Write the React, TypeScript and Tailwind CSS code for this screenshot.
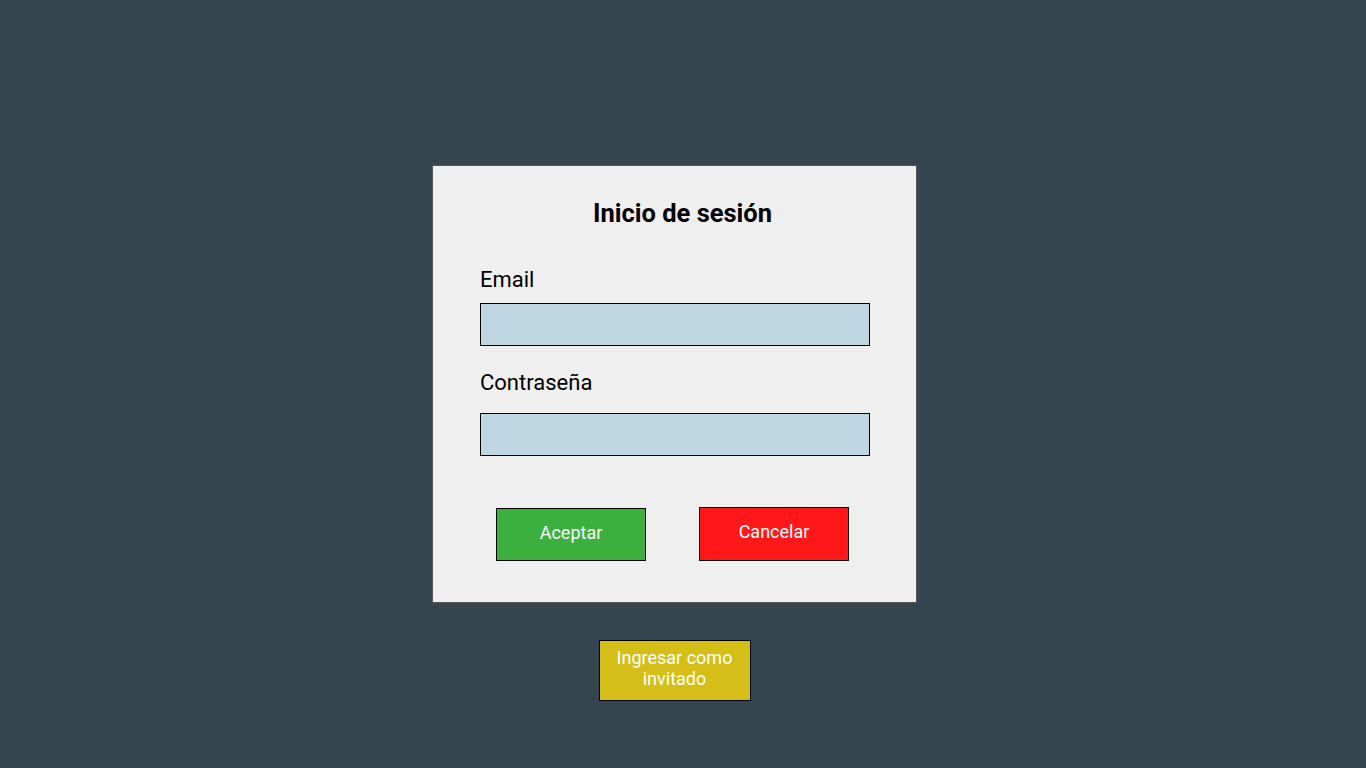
import React, { useState } from "react";

export default function App() {
  const [email, setEmail] = useState("");
  const [password, setPassword] = useState("");

  return (
    <div
      className="min-h-screen w-full bg-[#35454f] flex flex-col items-center pt-[165px] pr-[17px]"
      style={{ fontFamily: "Roboto, 'Noto Sans', sans-serif" }}
    >
      <div className="w-[485px] h-[438px] bg-[#efefef] border border-[#555] flex flex-col px-[47px]">
        <h1 className="mt-[31px] pl-[16px] text-center text-[25.5px] leading-[32px] font-bold text-black">
          Inicio de sesión
        </h1>

        <label className="mt-[37px] text-[22px] leading-[28px] text-black">Email</label>
        <input
          type="email"
          value={email}
          onChange={(e) => setEmail(e.target.value)}
          className="mt-[9px] w-[390px] h-[43px] bg-[#bfd7e2] border border-black outline-none px-2"
        />

        <label className="mt-[23px] text-[22px] leading-[28px] text-black">Contraseña</label>
        <input
          type="password"
          value={password}
          onChange={(e) => setPassword(e.target.value)}
          className="mt-[16px] w-[390px] h-[43px] bg-[#bfd7e2] border border-black outline-none px-2"
        />

        <div className="mt-[51px] flex justify-between pl-[16px] pr-[20px]">
          <button className="w-[150px] h-[53px] mt-px pb-[5px] bg-[#3bb03e] border border-black text-white text-[18px]">
            Aceptar
          </button>
          <button className="w-[150px] h-[54px] pb-[5px] bg-[#ff1719] border border-black text-white text-[18px]">
            Cancelar
          </button>
        </div>
      </div>

      <button className="mt-[37px] w-[152px] h-[61px] pb-[6px] bg-[#d4be17] border border-black text-white text-[18px] leading-[21px] px-2">
        Ingresar como invitado
      </button>
    </div>
  );
}
